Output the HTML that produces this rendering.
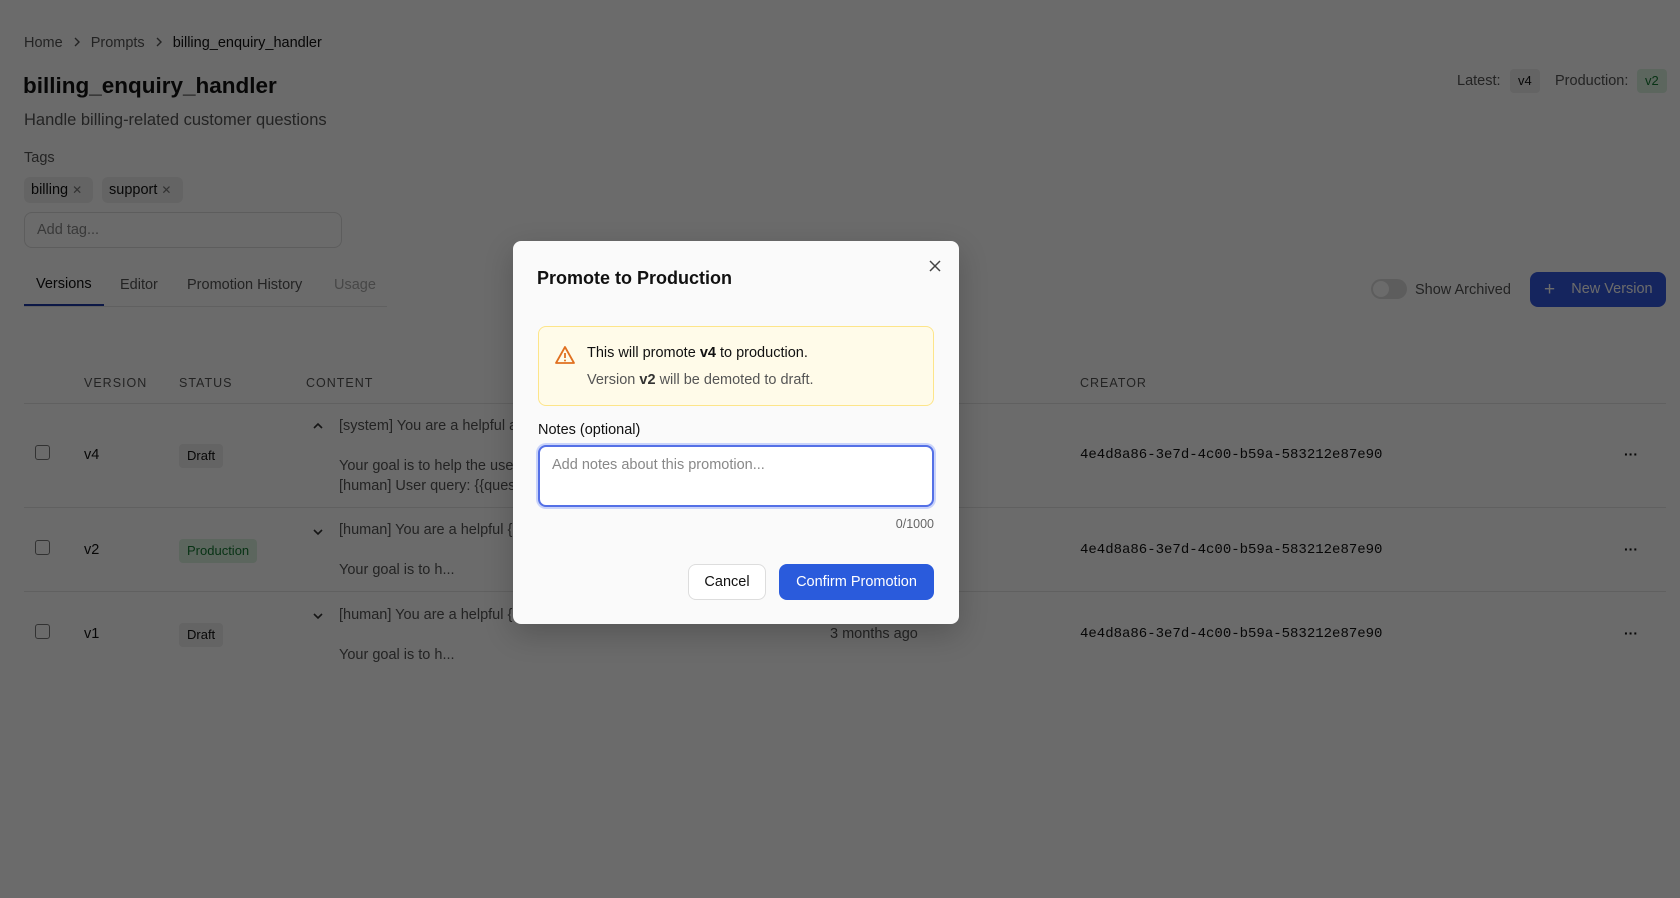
<!DOCTYPE html>
<html><head><meta charset="utf-8"><style>
*{box-sizing:border-box;margin:0;padding:0}
body{width:1680px;height:898px;position:relative;overflow:hidden;background:#fff;font-family:"Liberation Sans",Arial,sans-serif;color:#111}
.a{position:absolute;white-space:nowrap}
.mono{font-family:"Liberation Mono",monospace}
.gray{color:#555}
.badge{position:absolute;border-radius:4px;font-size:13px;padding:0 8px;height:24px;line-height:24px}
.cb{position:absolute;width:15px;height:15px;border:1.5px solid #777;border-radius:3px;background:#fff}
.hd{font-size:12.5px;letter-spacing:1px;color:#555}
.line{position:absolute;left:24px;width:1642px;height:1px;background:#e5e5e5}
.ct{font-size:14.5px;color:#555}
#ov{position:absolute;inset:0;background:rgba(0,0,0,.58)}
</style></head><body>
<div class="a gray" style="left:24px;top:35px;font-size:14.5px">Home<svg width="28" height="12" viewBox="0 0 28 12" style="vertical-align:-1px"><path d="M12 2l4 4-4 4" fill="none" stroke="#555" stroke-width="1.4"/></svg>Prompts<svg width="28" height="12" viewBox="0 0 28 12" style="vertical-align:-1px"><path d="M12 2l4 4-4 4" fill="none" stroke="#555" stroke-width="1.4"/></svg><span style="color:#111">billing_enquiry_handler</span></div>
<div class="a" style="left:23px;top:73px;font-size:22.5px;font-weight:bold">billing_enquiry_handler</div>
<div class="a gray" style="left:24px;top:111px;font-size:16.5px">Handle billing-related customer questions</div>
<div class="a gray" style="left:24px;top:150px;font-size:14.5px">Tags</div>
<div class="a" style="left:24px;top:177px;width:69px;height:26px;background:#eee;border-radius:6px;font-size:14.5px;line-height:26px;padding-left:7px">billing <span style="color:#777;font-size:12px">✕</span></div>
<div class="a" style="left:102px;top:177px;width:81px;height:26px;background:#eee;border-radius:6px;font-size:14.5px;line-height:26px;padding-left:7px">support <span style="color:#777;font-size:12px">✕</span></div>
<div class="a" style="left:24px;top:212px;width:318px;height:36px;border:1px solid #ddd;border-radius:8px;font-size:14.5px;line-height:34px;padding-left:12px;color:#888">Add tag...</div>
<div class="a" style="left:24px;top:306px;width:363px;height:1px;background:#e5e5e5"></div>
<div class="a" style="left:24px;top:304px;width:80px;height:2px;background:#1e3aa8"></div>
<div class="a" style="left:36px;top:276px;font-size:14.5px">Versions</div>
<div class="a gray" style="left:120px;top:277px;font-size:14.5px">Editor</div>
<div class="a gray" style="left:187px;top:277px;font-size:14.5px">Promotion History</div>
<div class="a" style="left:334px;top:277px;font-size:14.5px;color:#aaa">Usage</div>
<div class="a gray" style="left:1457px;top:73px;font-size:14.5px">Latest:</div>
<div class="badge" style="left:1510px;top:69px;background:#eee">v4</div>
<div class="a gray" style="left:1555px;top:73px;font-size:14.5px">Production:</div>
<div class="badge" style="left:1637px;top:69px;background:#dcf2e0;color:#157a32">v2</div>
<div class="a" style="left:1371px;top:279px;width:36px;height:20px;border-radius:10px;background:#ddd"><div style="position:absolute;left:2px;top:2px;width:16px;height:16px;border-radius:50%;background:#fff"></div></div>
<div class="a gray" style="left:1415px;top:282px;font-size:14.5px">Show Archived</div>
<div class="a" style="left:1530px;top:272px;width:136px;height:35px;border-radius:8px;background:#3358e0;color:#fff;font-size:14.5px;line-height:35px;padding-left:14px"><span style="font-size:19px;vertical-align:-2px">+</span>&nbsp;&nbsp;&nbsp;&nbsp;New Version</div>
<div class="a hd" style="left:84px;top:376px">VERSION</div>
<div class="a hd" style="left:179px;top:376px">STATUS</div>
<div class="a hd" style="left:306px;top:376px">CONTENT</div>
<div class="a hd" style="left:1080px;top:376px">CREATOR</div>
<div class="line" style="top:403px"></div>
<div class="line" style="top:507px"></div>
<div class="line" style="top:591px"></div>
<div class="cb" style="left:35px;top:445px"></div>
<div class="a" style="left:84px;top:447px;font-size:14.5px">v4</div>
<div class="badge" style="left:179px;top:444px;background:#eee">Draft</div>
<svg class="a" style="left:312px;top:422px" width="12" height="8" viewBox="0 0 12 8"><path d="M2 6l4-4 4 4" fill="none" stroke="#333" stroke-width="1.6"/></svg>
<div class="a ct" style="left:339px;top:418px">[system] You are a helpful a</div>
<div class="a ct" style="left:339px;top:458px">Your goal is to help the user</div>
<div class="a ct" style="left:339px;top:478px">[human] User query: {{ques</div>
<div class="a mono" style="left:1080px;top:447px;font-size:14px">4e4d8a86-3e7d-4c00-b59a-583212e87e90</div>
<div class="a" style="left:1624px;top:446px;font-size:14px;font-weight:bold">···</div>
<div class="cb" style="left:35px;top:540px"></div>
<div class="a" style="left:84px;top:542px;font-size:14.5px">v2</div>
<div class="badge" style="left:179px;top:539px;background:#dcf2e0;color:#157a32">Production</div>
<svg class="a" style="left:312px;top:528px" width="12" height="8" viewBox="0 0 12 8"><path d="M2 2l4 4 4-4" fill="none" stroke="#333" stroke-width="1.6"/></svg>
<div class="a ct" style="left:339px;top:522px">[human] You are a helpful {</div>
<div class="a ct" style="left:339px;top:562px">Your goal is to h...</div>
<div class="a mono" style="left:1080px;top:542px;font-size:14px">4e4d8a86-3e7d-4c00-b59a-583212e87e90</div>
<div class="a" style="left:1624px;top:541px;font-size:14px;font-weight:bold">···</div>
<div class="cb" style="left:35px;top:624px"></div>
<div class="a" style="left:84px;top:626px;font-size:14.5px">v1</div>
<div class="badge" style="left:179px;top:623px;background:#eee">Draft</div>
<svg class="a" style="left:312px;top:612px" width="12" height="8" viewBox="0 0 12 8"><path d="M2 2l4 4 4-4" fill="none" stroke="#333" stroke-width="1.6"/></svg>
<div class="a ct" style="left:339px;top:607px">[human] You are a helpful {</div>
<div class="a ct" style="left:339px;top:647px">Your goal is to h...</div>
<div class="a ct" style="left:830px;top:626px">3 months ago</div>
<div class="a mono" style="left:1080px;top:626px;font-size:14px">4e4d8a86-3e7d-4c00-b59a-583212e87e90</div>
<div class="a" style="left:1624px;top:625px;font-size:14px;font-weight:bold">···</div>
<div id="ov"></div>
<div class="a" style="left:513px;top:241px;width:446px;height:383px;background:#fafafa;border-radius:8px;box-shadow:0 10px 30px rgba(0,0,0,.2)">
 <div class="a" style="left:24px;top:27px;font-size:18px;font-weight:bold;color:#111">Promote to Production</div>
 <svg class="a" style="left:415px;top:18px" width="14" height="14" viewBox="0 0 14 14"><path d="M2 2L12 12M12 2L2 12" stroke="#444" stroke-width="1.5"/></svg>
 <div class="a" style="left:25px;top:85px;width:396px;height:80px;background:#fffbe9;border:1px solid #fde58a;border-radius:8px">
  <svg class="a" style="left:15px;top:18px" width="22" height="20" viewBox="0 0 22 20"><path d="M11 2L20 18H2Z" fill="none" stroke="#e07020" stroke-width="1.8" stroke-linejoin="round"/><path d="M11 8v5" stroke="#e07020" stroke-width="1.8"/><circle cx="11" cy="15.5" r="1" fill="#e07020"/></svg>
  <div class="a" style="left:48px;top:18px;font-size:14.5px;color:#111">This will promote <b>v4</b> to production.</div>
  <div class="a" style="left:48px;top:45px;font-size:14.5px;color:#555">Version <b style="color:#333">v2</b> will be demoted to draft.</div>
 </div>
 <div class="a" style="left:25px;top:181px;font-size:14.5px;color:#111">Notes (optional)</div>
 <div class="a" style="left:25px;top:204px;width:396px;height:62px;background:#fff;border:2px solid #5470e6;border-radius:8px;box-shadow:0 0 0 2px #c9d3fa;font-size:14.5px;color:#888;padding:10px 12px">Add notes about this promotion...</div>
 <div class="a" style="left:0;width:421px;top:276px;text-align:right;font-size:12.5px;color:#666">0/1000</div>
 <div class="a" style="left:175px;top:323px;width:78px;height:36px;border:1px solid #ddd;border-radius:8px;background:#fff;font-size:14.5px;line-height:34px;text-align:center;color:#111">Cancel</div>
 <div class="a" style="left:266px;top:323px;width:155px;height:36px;border-radius:8px;background:#2a5bdc;font-size:14.5px;line-height:36px;text-align:center;color:#fff">Confirm Promotion</div>
</div>
</body></html>
